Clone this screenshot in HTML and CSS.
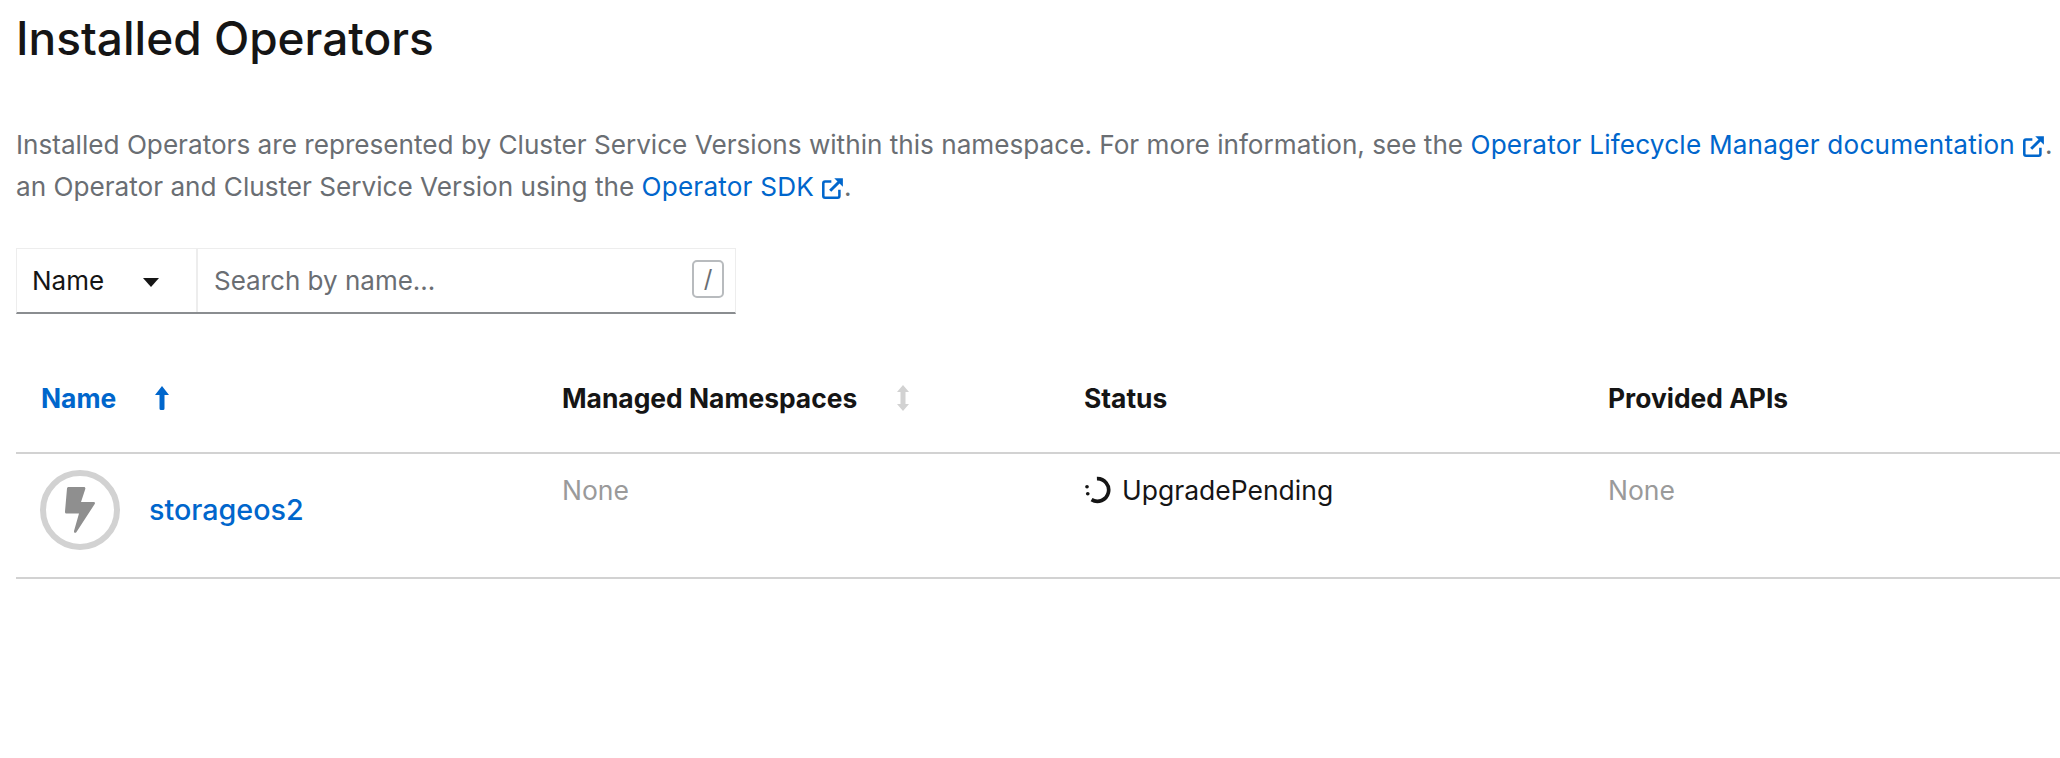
FILE: index.html
```html
<!DOCTYPE html>
<html lang="en">
<head>
	<meta charset="UTF-8">
	<link rel="stylesheet" href="styles.css">
	<title>Installed Operators</title>
</head>
<body>
	<h1 class="title">Installed Operators</h1>
	<p class="help">
		Installed Operators are represented by Cluster Service Versions within this namespace. For more information, see the
		<a href="#">Operator Lifecycle Manager documentation<svg class="ext" viewBox="0 0 20 20"><path d="M9 4H3.500A1.500 1.500 0 0 0 2 5.500V16.500A1.500 1.500 0 0 0 3.500 18H14.500A1.500 1.500 0 0 0 16 16.500V11" fill="none" stroke="currentColor" stroke-width="2.200"/><path d="M8 12L17 3" fill="none" stroke="currentColor" stroke-width="2.600"/><path d="M11.500 1H19V8.500Z" fill="currentColor"/></svg></a>.<br>
		an Operator and Cluster Service Version using the
		<a href="#">Operator SDK<svg class="ext" viewBox="0 0 20 20"><path d="M9 4H3.500A1.500 1.500 0 0 0 2 5.500V16.500A1.500 1.500 0 0 0 3.500 18H14.500A1.500 1.500 0 0 0 16 16.500V11" fill="none" stroke="currentColor" stroke-width="2.200"/><path d="M8 12L17 3" fill="none" stroke="currentColor" stroke-width="2.600"/><path d="M11.500 1H19V8.500Z" fill="currentColor"/></svg></a>.
	</p>

	<div class="filter">
		<div class="filter-select">
			<span>Name</span>
			<svg class="caret" viewBox="0 0 16 10"><path d="M0 0H16L8 9Z" fill="currentColor"/></svg>
		</div>
		<div class="filter-input">
			<span>Search by name...</span>
			<kbd class="slash">/</kbd>
		</div>
	</div>

	<div class="table">
		<div class="row head">
			<div class="cell sorted">
				<span>Name</span>
				<svg class="sort" viewBox="0 0 14 24"><path d="M7 0L14 9H9.500V22.500A1.500 1.500 0 0 1 8 24H6A1.500 1.500 0 0 1 4.500 22.500V9H0Z" fill="currentColor"/></svg>
			</div>
			<div class="cell">
				<span>Managed Namespaces</span>
				<svg class="sort muted" viewBox="0 0 14 26"><path d="M7 0L13 7H9.500V19H13L7 26L1 19H4.500V7H1Z" fill="currentColor"/></svg>
			</div>
			<div class="cell">Status</div>
			<div class="cell">Provided APIs</div>
		</div>
		<div class="row body">
			<div class="cell name-cell">
				<span class="logo">
					<svg viewBox="0 0 30 46"><path d="M3.500 0H19C20 0 20.600 1 20.300 2L16 15H28.500C29.800 15 30.300 16 29.700 17L11.500 45C10.500 46.500 8.600 46 9 44L14 26.500H1.500C.4 26.500 -.2 25.500 0 24.500L2 1.500C2.100 .6 2.700 0 3.500 0Z" fill="currentColor"/></svg>
				</span>
				<a href="#" class="op-name">storageos2</a>
			</div>
			<div class="cell none">None</div>
			<div class="cell status">
				<svg class="spinner" viewBox="0 0 26 26"><path d="M12 2.500A10.500 10.500 0 1 1 7 22" fill="none" stroke="currentColor" stroke-width="3.400"/><circle cx="2.800" cy="10" r="1.700" fill="currentColor"/><circle cx="3.500" cy="16.500" r="1.700" fill="currentColor"/></svg>
				<span>UpgradePending</span>
			</div>
			<div class="cell none">None</div>
		</div>
	</div>
</body>
</html>
```

FILE: styles.css
```css
body {
	margin: 0;
	padding: 0 0 0 16px;
	background: #fff;
	color: #151515;
	font-family: "Inter", "Liberation Sans", sans-serif;
	overflow: hidden;
}
a {
	color: #06c;
	text-decoration: none;
}
.title {
	margin: 0;
	padding-top: 9px;
	font-size: 46px;
	line-height: 58px;
	font-weight: 500;
}
.help {
	margin: 57px 0 0;
	font-size: 26.150px;
	line-height: 42px;
	color: #6a6e73;
	white-space: nowrap;
}
.help a {
	letter-spacing: .2px;
}
.ext {
	width: 23px;
	height: 23px;
	margin-left: 7px;
	vertical-align: -4px;
}
.filter {
	display: flex;
	width: 720px;
	height: 66px;
	margin-top: 40px;
	border: 1px solid #ededed;
	border-bottom: 2px solid #8a8d90;
	box-sizing: border-box;
	font-size: 26px;
}
.filter-select {
	display: flex;
	align-items: center;
	justify-content: space-between;
	width: 181px;
	padding: 0 37px 0 15px;
	box-sizing: border-box;
	border-right: 2px solid #ededed;
}
.caret {
	width: 16px;
	height: 10px;
	margin-top: 4px;
}
.filter-input {
	display: flex;
	flex: 1;
	align-items: center;
	justify-content: space-between;
	padding: 0 11px 0 16px;
	color: #6a6e73;
}
.slash {
	width: 32px;
	height: 38px;
	line-height: 34px;
	border: 2px solid #b8bbbe;
	border-radius: 5px;
	box-sizing: border-box;
	text-align: center;
	font-family: inherit;
	font-size: 24px;
	margin-top: -3px;
}
.row {
	display: grid;
	grid-template-columns: 521px 522px 524px 1fr;
	border-bottom: 2px solid #d2d2d2;
}
.row.head {
	height: 140px;
	box-sizing: border-box;
	font-size: 26.400px;
	font-weight: 700;
}
.row.body {
	height: 125px;
	box-sizing: border-box;
	font-size: 26.500px;
}
.cell {
	padding-left: 25px;
}
.head .cell {
	display: flex;
	align-items: center;
	gap: 39px;
	padding-top: 30px;
}
.sorted {
	color: #06c;
}
.sort {
	width: 14px;
	height: 24px;
}
.muted {
	height: 28px;
	color: #d2d2d2;
}
.body .cell {
	padding-top: 20px;
}
.body .name-cell {
	display: flex;
	align-items: center;
	gap: 29px;
	padding: 0 0 12px 24px;
}
.logo {
	display: flex;
	align-items: center;
	justify-content: center;
	width: 80px;
	height: 80px;
	border: 6px solid #d2d2d2;
	border-radius: 50%;
	box-sizing: border-box;
	color: #8f8f8f;
}
.logo svg {
	width: 30px;
	height: 46px;
}
.op-name {
	font-size: 28.700px;
	font-weight: 500;
}
.none {
	color: #9a9a9a;
}
.status {
	display: flex;
	align-items: flex-start;
	gap: 10px;
	color: #151515;
}
.spinner {
	width: 28px;
	height: 28px;
	margin-top: 2px;
}
```
